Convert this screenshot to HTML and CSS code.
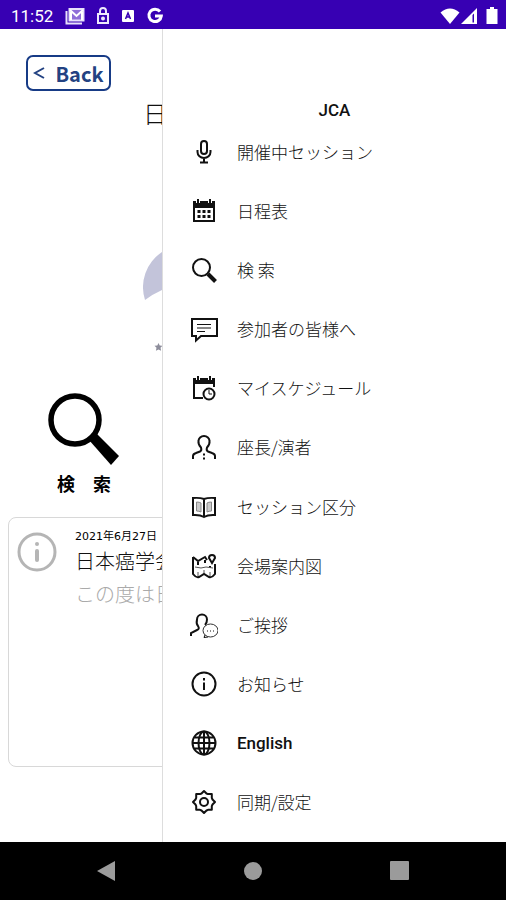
FILE: index.html
```
<!DOCTYPE html>
<html lang="ja">
<head>
<meta charset="utf-8">
<meta name="viewport" content="width=device-width, initial-scale=1">
<title>JCA</title>
<link rel="stylesheet" href="styles.css">
</head>
<body>
<header class="status">
  <span class="time">11:52</span>
  <div class="status-icons">
    <svg width="20" height="18" viewBox="0 0 20 18" fill="none" stroke="#e8e0fb" stroke-width="2"><path d="M1.5 4v12.500H17" /><rect x="4.500" y="2" width="14" height="11.500" fill="#8f6fd8"/><path d="M5 3l6.500 6L18 3M6 13V5M17 13V5" stroke="#fff"/></svg>
    <svg width="14" height="18" viewBox="0 0 14 18" fill="none" stroke="#eee8fc" stroke-width="2"><rect x="2" y="7" width="10" height="9"/><path d="M4 7V4a3 3 0 0 1 6 0v3"/><circle cx="7" cy="11.500" r="1" fill="#fff"/></svg>
    <svg width="14" height="18" viewBox="0 0 14 18"><rect x="1" y="3" width="12" height="12" rx="1" fill="#fff"/><path d="M4.500 12L7 6l2.500 6M5.500 10h3" fill="none" stroke="#3700b3" stroke-width="1.500"/></svg>
    <svg width="18" height="18" viewBox="0 0 18 18" fill="none" stroke="#fff" stroke-width="3"><path d="M14 4.500A6.200 6.200 0 1 0 15.300 9H9"/></svg>
  </div>
  <div class="signal">
    <svg width="20" height="18" viewBox="0 0 20 18" fill="#fff"><path d="M.5 5.500Q10-2.500 19.500 5.500L10 17z"/></svg>
    <svg width="17" height="18" viewBox="0 0 17 18" fill="#fff"><path d="M0 17L16 1v16zM11.500 8v7.500h1.500V6.500z" fill-rule="evenodd"/></svg>
    <svg width="12" height="18" viewBox="0 0 12 18" fill="#fff"><path d="M4 0h4v2h3.500v15H.5V2H4z"/></svg>
  </div>
</header>
<div class="screen">
  <main class="page">
    <button class="back" type="button"><svg width="12" height="14" viewBox="0 0 12 14" fill="none" stroke="#234282" stroke-width="2"><path d="M11 2L2 7l9 5"/></svg>Back</button>
    <h1 class="title">日</h1>
    <svg class="emblem" viewBox="0 0 19 110" width="19" height="110"><path d="M19 7A42 42 0 0 0 2 55q8-6 17-10z" fill="#c3c4da"/><path d="M15.500 98l1.200 2.500 2.800.3-2 2 .6 3-2.600-1.400-2.600 1.400.6-3-2-2 2.800-.3z" fill="#8d8d9b"/></svg>
    <a class="search" href="#search">
      <svg width="74" height="76" viewBox="0 0 74 76"><circle cx="28" cy="30" r="24" fill="none" stroke="#000" stroke-width="5.500"/><path d="M42 50l7-7L72 66l-8 9z"/></svg>
      <span>検　索</span>
    </a>
    <article class="notice">
      <svg width="40" height="46" viewBox="0 0 40 46" fill="none" stroke="#b5b5b5"><circle cx="20" cy="23" r="18" stroke-width="3"/><path d="M20 22v9" stroke-width="4" stroke-linecap="round"/><circle cx="20" cy="15" r="2" fill="#b5b5b5" stroke="none"/></svg>
      <div class="notice-text">
        <time datetime="2021-06-27">2021年6月27日</time>
        <h2>日本癌学会</h2>
        <p>この度は日</p>
      </div>
    </article>
  </main>
  <nav class="drawer" aria-labelledby="drawer-title">
    <h2 class="drawer-title" id="drawer-title">JCA</h2>
    <ul class="menu">
      <li><a href="#live"><svg viewBox="0 0 28 28"><rect x="11" y="3" width="6" height="13" rx="3"/><path d="M7.500 12v2a6.500 6 0 0 0 13 0v-2M14 20v4M10 24.500h8"/></svg>開催中セッション</a></li>
      <li><a href="#timetable"><svg viewBox="0 0 28 28"><path d="M4 5h20v19H4z"/><path d="M4 5h20v5H4z" class="solid"/><path d="M8 3v3M20 3v3" stroke="#fff" stroke-width="4"/><path d="M8 2v4M20 2v4"/><path d="M7.500 14.500h13M7.500 19.500h13" stroke-width="3" stroke-dasharray="3 2"/></svg>日程表</a></li>
      <li><a href="#find"><svg viewBox="0 0 28 28"><circle cx="11.500" cy="11.500" r="8.500"/><path d="M18 18l7.500 7.500" stroke-width="4"/></svg>検 索</a></li>
      <li><a href="#attendees"><svg viewBox="0 0 28 28"><path d="M2 4h25v17H11l-5 4.500V21H2z"/><path d="M7 9.500h14M7 13h14M7 16.500h8" stroke-width="1"/></svg>参加者の皆様へ</a></li>
      <li><a href="#schedule"><svg viewBox="0 0 28 28"><path d="M4 5v19h9M4 5h20v8"/><path d="M4 5h20v4H4z" class="solid"/><path d="M8 3v3M20 3v3" stroke="#fff" stroke-width="4"/><path d="M8 2v4M20 2v4"/><circle cx="19" cy="20" r="5.500"/><path d="M19 16v4h3" stroke-width="1"/></svg>マイスケジュール</a></li>
      <li><a href="#speakers"><svg viewBox="0 0 28 28"><path d="M3 26v-3q0-2 3-3l4-1.500q2-1 1-4-3-3-2.500-6.500a5.500 5 0 0 1 11 0q.5 3.500-2.500 6.500-1 3 1 4l4 1.500q3 1 3 3v3"/><path d="M14 20.500v2M14 24.500v2" /></svg>座長/演者</a></li>
      <li><a href="#sessions"><svg viewBox="0 0 28 28"><path d="M14 6Q10 4.500 3 5v17q7-.5 11 2 4-2.500 11-2V5q-7-.5-11 1v17"/><path d="M6.500 9q3 0 4.500 1v9q-2-1-4.500-1zM21.500 9q-3 0-4.500 1v9q2-1 4.500-1z" fill="#ccc" stroke="#888" stroke-width="1"/></svg>セッション区分</a></li>
      <li><a href="#map"><svg viewBox="0 0 28 28"><path d="M3 5l5 4 7-4 2 3M3 5v17q3 4 6 3l5-3 5 3q3 1 6-3V12"/><path d="M22 11l-3-5a3 3 0 1 1 6 0zM8 10v3M15 8v3M20 14v2"/><path d="M5 15l6 1 5-1 7 1M8 20v4M20 20v4M14 18v3" stroke="#555" stroke-width="1"/></svg>会場案内図</a></li>
      <li><a href="#greeting"><svg viewBox="0 0 28 28"><path d="M1 25v-3l6-3q3-1 1-4-2-2-1-6.500a5 5 0 0 1 10 0Q17 12 15 14"/><ellipse cx="20.500" cy="19.500" rx="7.500" ry="6.500" stroke="#333" stroke-width="1"/><path d="M15 24l-1 2.500 4-.5" stroke-width="1"/><path d="M17 20h8" stroke-width="1" stroke-dasharray="1 2"/></svg>ご挨拶</a></li>
      <li><a href="#news"><svg viewBox="0 0 28 28"><circle cx="14" cy="14" r="11.500"/><path d="M14 12.500V20M14 8v2.500"/></svg>お知らせ</a></li>
      <li><a href="#english" lang="en"><svg viewBox="0 0 28 28"><circle cx="14" cy="14" r="11.500"/><ellipse cx="14" cy="14" rx="5.500" ry="11.500"/><path d="M14 2.500v23M2.500 14h23M4.500 8.500h19M4.500 19.500h19"/></svg>English</a></li>
      <li><a href="#settings"><svg viewBox="0 0 28 28"><path d="M11.500 5.500L14 3l2.500 2.500 1.500.6h3.800v3.800l.7 1.600L25 14l-2.500 2.500-.7 1.600v3.700H18l-1.500.7L14 25l-2.500-2.500-1.500-.7H6.200v-3.700l-.7-1.600L3 14l2.500-2.500.7-1.600V6.100H10z" stroke-linejoin="round"/><circle cx="14" cy="14" r="4"/></svg>同期/設定</a></li>
    </ul>
  </nav>
</div>
<footer class="system-nav">
  <button type="button" aria-label="戻る"><svg width="20" height="22" viewBox="0 0 20 22"><path d="M1 11L19 1v20z"/></svg></button>
  <button type="button" aria-label="ホーム"><svg width="20" height="22" viewBox="0 0 20 22"><circle cx="10" cy="11" r="9"/></svg></button>
  <button type="button" aria-label="履歴"><svg width="20" height="22" viewBox="0 0 20 22"><rect x="0" y="1" width="19" height="19" rx="1"/></svg></button>
</footer>
</body>
</html>
```
FILE: styles.css
```
* { box-sizing: border-box; }
body {
  margin: 0;
  min-height: 100vh;
  display: flex;
  flex-direction: column;
  background: #fff;
  color: #111;
  font-family: Roboto, "Noto Sans CJK JP", sans-serif;
}
svg { display: block; flex: none; }
a { color: inherit; text-decoration: none; }
button { border: 0; padding: 0; background: none; font: inherit; }
h1, h2, p, ul { margin: 0; padding: 0; font-weight: 300; }

.status {
  display: flex;
  align-items: center;
  height: 29px;
  padding: 2px 8px 0 11px;
  background: #3700b3;
  color: #fff;
}
.time { font-size: 17px; line-height: 20px; }
.status-icons { display: flex; gap: 11px; margin-left: 12px; }
.signal { display: flex; gap: 1px; margin-left: auto; }
.signal svg:last-child { margin-left: 7px; }

.screen { flex: 1; display: grid; grid-template-columns: 32% 68%; }
.page {
  display: flex;
  flex-direction: column;
  align-items: flex-start;
  padding-top: 26px;
  overflow: hidden;
}
.back {
  display: flex;
  align-items: center;
  justify-content: center;
  gap: 10px;
  width: 85px;
  height: 36px;
  margin-left: 26px;
  border: 2px solid #173b86;
  border-radius: 7px;
  color: #234282;
  font-family: "Noto Sans CJK JP", sans-serif;
  font-size: 20px;
  font-weight: 700;
}
.title {
  align-self: flex-end;
  width: 19px;
  margin-top: 6px;
  font-family: "Noto Sans CJK JP", sans-serif;
  font-size: 24px;
  line-height: 32px;
}
.emblem { align-self: flex-end; margin-top: 116px; }
.search {
  display: flex;
  flex-direction: column;
  align-items: center;
  gap: 5px;
  margin: 35px 0 0 47px;
  color: #000;
  font-family: "Noto Sans CJK JP", sans-serif;
  font-size: 18px;
  line-height: 24px;
  font-weight: 700;
}
.notice {
  display: flex;
  align-items: flex-start;
  gap: 18px;
  width: calc(100% + 16px);
  height: 250px;
  margin: 22px 0 0 8px;
  padding: 11px 8px;
  border: 1px solid #d8d8d8;
  border-radius: 8px;
  white-space: nowrap;
}
.notice-text { font-family: "Noto Sans CJK JP", sans-serif; }
.notice time {
  display: block;
  color: #000;
  font-family: "DejaVu Sans", "Noto Sans CJK JP", sans-serif;
  font-size: 11px;
  line-height: 16px;
}
.notice h2 { font-size: 20px; line-height: 32px; }
.notice p { font-size: 20px; line-height: 34px; color: #aaa; }

.drawer {
  display: flex;
  flex-direction: column;
  padding-bottom: 10px;
  background: #fff;
  border-left: 1px solid #ddd;
}
.drawer-title {
  padding-top: 70px;
  font-size: 17px;
  line-height: 23px;
  font-weight: 500;
  text-align: center;
}
.menu { flex: 1; display: grid; grid-auto-rows: 1fr; list-style: none; }
.menu li { display: flex; }
.menu a {
  flex: 1;
  display: flex;
  align-items: center;
  gap: 19px;
  padding-left: 27px;
  font-family: "Noto Sans CJK JP", sans-serif;
  font-size: 17px;
  line-height: 24px;
  font-weight: 300;
}
.menu a:lang(en) { font-family: Roboto, sans-serif; font-weight: 500; }
.menu svg { width: 28px; height: 28px; fill: none; stroke: #111; stroke-width: 2; }
.menu .solid { fill: #111; }

.system-nav {
  display: grid;
  grid-template-columns: repeat(3, 1fr);
  height: 58px;
  padding: 0 33px;
  background: #000;
}
.system-nav button { display: grid; place-items: center; }
.system-nav svg { fill: #9b9b9b; }
```
